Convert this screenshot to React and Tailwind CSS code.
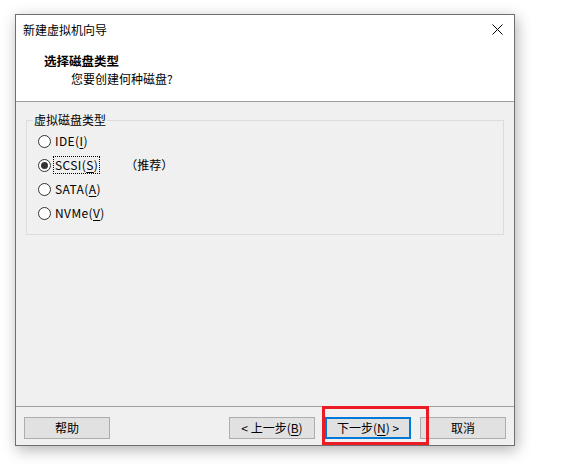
import React from 'react'

const font = "font-['Noto_Sans_CJK_SC',sans-serif]"

function Radio({ checked, label, mnemonic, focused, extra }) {
  return (
    <div className="flex items-center h-[24px]">
      <span className="w-[13px] h-[13px] rounded-full border border-[#333333] bg-white flex items-center justify-center">
        {checked && <span className="w-[7px] h-[7px] rounded-full bg-[#333333]" />}
      </span>
      <span
        className={
          'ml-[3px] px-[1px] leading-[16px] text-[12px] tracking-[0.4px] text-black ' +
          (focused ? 'outline outline-1 outline-dotted outline-black' : '')
        }
      >
        {label}(<span className="underline underline-offset-2">{mnemonic}</span>)
      </span>
      {extra && <span className="ml-[26px] text-[12px] leading-[16px] text-black">{extra}</span>}
    </div>
  )
}

function Button({ children, primary }) {
  return (
    <button
      className={
        'w-[86px] h-[22px] flex items-center justify-center text-[12px] leading-none text-black bg-[#e1e1e1] ' +
        (primary ? 'border-2 border-[#0078d7]' : 'border border-[#adadad]')
      }
    >
      {children}
    </button>
  )
}

export default function App() {
  return (
    <div className={`w-[563px] h-[469px] bg-white pt-[14px] pl-[15px] ${font}`}>
      <div className="relative w-[500px] h-[432px] border border-[#6f6f6f] bg-[#f0f0f0] flex flex-col shadow-[2px_4px_14px_rgba(0,0,0,0.3)]">
        {/* header */}
        <div className="h-[86px] bg-white flex flex-col">
          <div className="h-[29px] flex items-center justify-between pl-[7px] pr-[11px]">
            <span className="text-[12px] leading-none text-black">新建虚拟机向导</span>
            <svg width="11" height="11" viewBox="0 0 11 11">
              <path d="M0.5 0.5 L10.5 10.5 M10.5 0.5 L0.5 10.5" stroke="#000" strokeWidth="1" fill="none" />
            </svg>
          </div>
          <div className="mt-[8px] pl-[28px] text-[12.5px] leading-[18px] font-bold text-black">选择磁盘类型</div>
          <div className="pl-[55px] text-[12px] leading-[18px] text-black">您要创建何种磁盘?</div>
        </div>
        <div className="h-px bg-[#a0a0a0]" />

        {/* body */}
        <div className="flex-1 px-[10px] pt-[10px]">
          <fieldset className="border border-[#dcdcdc]">
            <legend className="ml-[6px] px-[1px] text-[12px] leading-[16px] text-black">虚拟磁盘类型</legend>
            <div className="pl-[11px] pb-[9px] pt-[1px]">
              <Radio label="IDE" mnemonic="I" />
              <Radio label="SCSI" mnemonic="S" checked focused extra="（推荐）" />
              <Radio label="SATA" mnemonic="A" />
              <Radio label="NVMe" mnemonic="V" />
            </div>
          </fieldset>
        </div>

        {/* footer */}
        <div className="h-px bg-[#a0a0a0]" />
        <div className="h-[38px] pt-[10px] pl-[8px] pr-[8px] flex items-start">
          <Button>帮助</Button>
          <div className="ml-auto flex gap-[10px]">
            <Button>
              &lt; 上一步(<span className="underline underline-offset-2">B</span>)
            </Button>
            <Button primary>
              下一步(<span className="underline underline-offset-2">N</span>) &gt;
            </Button>
            <div className="ml-[-1px]">
              <Button>取消</Button>
            </div>
          </div>
        </div>

        {/* highlight box */}
        <div className="absolute left-[306px] top-[391px] w-[107px] h-[39px] border-[3px] border-[#ed1c24]" />
      </div>
    </div>
  )
}
